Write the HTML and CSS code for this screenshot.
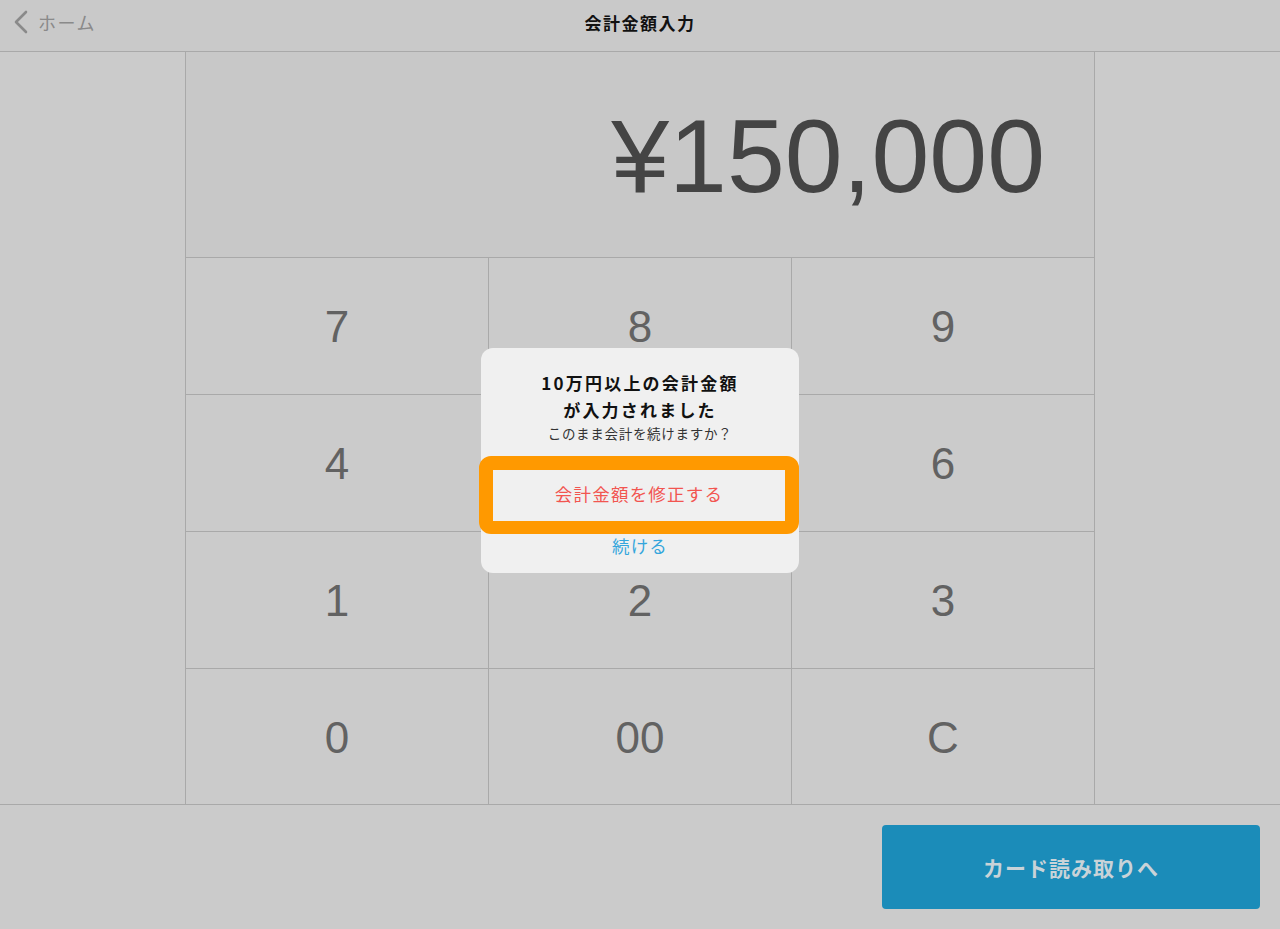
FILE: index.html
```html
<!DOCTYPE html>
<html lang="ja">
<head>
    <meta charset="UTF-8">
    <meta name="viewport" content="width=device-width, initial-scale=1.0">
    <title>会計金額入力</title>
    <link rel="stylesheet" href="styles.css">
</head>
<body>
    <div class="app">
        <header class="topbar">
            <a class="back" href="#">
                <svg class="chevron" width="16" height="24" viewBox="0 0 16 24">
                    <path d="M13 2 L3 12 L13 22" fill="none" stroke="#8a8a8a" stroke-width="2.6" stroke-linecap="round" stroke-linejoin="round"/>
                </svg>
                <span>ホーム</span>
            </a>
            <h1 class="title">会計金額入力</h1>
        </header>

        <main class="main">
            <div class="side"></div>
            <div class="pad">
                <div class="amount">¥150,000</div>
                <div class="keys">
                    <button class="key">7</button>
                    <button class="key">8</button>
                    <button class="key">9</button>
                    <button class="key">4</button>
                    <button class="key">5</button>
                    <button class="key">6</button>
                    <button class="key">1</button>
                    <button class="key">2</button>
                    <button class="key">3</button>
                    <button class="key">0</button>
                    <button class="key">00</button>
                    <button class="key">C</button>
                </div>
            </div>
            <div class="side"></div>
        </main>

        <footer class="bottombar">
            <button class="next">カード読み取りへ</button>
        </footer>
    </div>

    <div class="alert">
        <div class="alert-title">10万円以上の会計金額<br>が入力されました</div>
        <div class="alert-text">このまま会計を続けますか？</div>
        <div class="highlight">
            <button class="alert-btn danger">会計金額を修正する</button>
        </div>
        <button class="alert-btn ok">続ける</button>
    </div>
</body>
</html>
```

FILE: styles.css
```css
* {
    box-sizing: border-box;
}
body {
    margin: 0;
    width: 1280px;
    height: 929px;
    overflow: hidden;
    background-color: #cbcbcb;
    font-family: "Noto Sans CJK JP", "Liberation Sans", sans-serif;
    position: relative;
}
button {
    font-family: inherit;
    border: none;
    background: none;
    padding: 0;
    cursor: pointer;
}
.app {
    display: flex;
    flex-direction: column;
    height: 929px;
}
.topbar {
    height: 52px;
    flex-shrink: 0;
    background-color: #c9c9c9;
    border-bottom: 1px solid #a9a9a9;
    display: flex;
    align-items: center;
    justify-content: center;
    position: relative;
}
.back {
    position: absolute;
    left: 13px;
    top: 9px;
    display: flex;
    align-items: center;
    gap: 9px;
    color: #8a8a8a;
    text-decoration: none;
    font-size: 18px;
    letter-spacing: 1.5px;
    line-height: 26px;
}
.title {
    margin: 0;
    margin-top: -7px;
    font-size: 17px;
    font-weight: bold;
    letter-spacing: 1.5px;
    color: #111;
}
.main {
    display: flex;
    flex-shrink: 0;
}
.side {
    width: 185px;
    background-color: #cbcbcb;
    border-bottom: 1px solid #a9a9a9;
}
.pad {
    width: 910px;
    border-left: 1px solid #a9a9a9;
    border-right: 1px solid #a9a9a9;
    border-bottom: 1px solid #a9a9a9;
}
.amount {
    height: 206px;
    background-color: #c8c8c8;
    border-bottom: 1px solid #a9a9a9;
    font-family: "Liberation Sans", sans-serif;
    font-size: 104px;
    color: #444;
    text-align: right;
    padding-right: 49px;
    padding-top: 44px;
    line-height: 120px;
}
.keys {
    display: grid;
    grid-template-columns: repeat(3, 302px);
    grid-template-rows: 136px 136px 136px 135px;
    gap: 1px;
    background-color: #a9a9a9;
}
.key {
    background-color: #cbcbcb;
    font-family: "Liberation Sans", sans-serif;
    font-size: 44px;
    color: #626262;
    padding-top: 2px;
}
.bottombar {
    flex: 1;
    background-color: #cbcbcb;
    display: flex;
    justify-content: flex-end;
    align-items: flex-start;
    padding: 20px 20px 0 0;
}
.next {
    width: 378px;
    height: 84px;
    border-radius: 4px;
    background-color: #1b8cb9;
    color: #c9d3d8;
    font-size: 21px;
    font-weight: bold;
    letter-spacing: 1px;
}
.alert {
    position: absolute;
    left: 481px;
    top: 348px;
    width: 318px;
    height: 225px;
    background-color: #f0f0f0;
    border-radius: 12px;
    display: flex;
    flex-direction: column;
    align-items: center;
    padding-top: 21px;
}
.alert-title {
    font-size: 17px;
    font-weight: bold;
    line-height: 27px;
    letter-spacing: 2.2px;
    text-align: center;
    color: #111;
}
.alert-text {
    font-size: 13.5px;
    color: #333;
    line-height: 18px;
    margin-top: 1px;
    letter-spacing: 0.7px;
}
.highlight {
    width: 320px;
    margin-left: -2px;
    margin-top: 14px;
    border: 14px solid #ff9900;
    border-bottom-width: 13px;
    border-radius: 12px;
}
.alert-btn {
    display: block;
    width: 100%;
    height: 51px;
    font-size: 17.5px;
    letter-spacing: 1.2px;
    line-height: 20px;
    padding-bottom: 4px;
    background-color: #f0f0f0;
}
.danger {
    color: #f25550;
}
.ok {
    width: auto;
    height: 26px;
    color: #35a6dc;
    margin-top: 1px;
    background: none;
}
```
